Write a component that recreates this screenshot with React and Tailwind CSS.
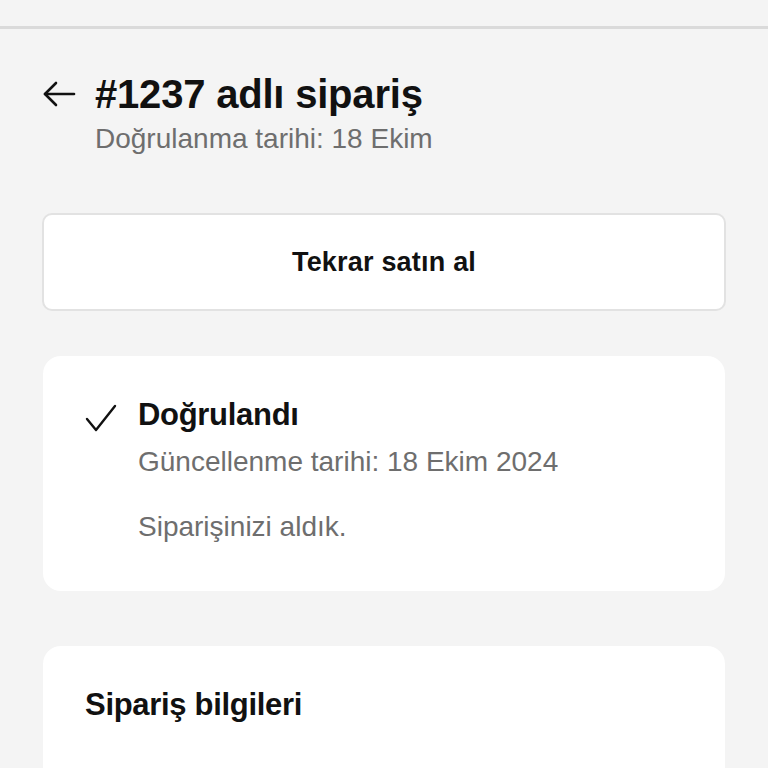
import React from "react";

export default function App() {
  return (
    <div className="w-[768px] h-[768px] overflow-hidden bg-[#f4f4f4] text-black" style={{ fontFamily: '"Liberation Sans", Arial, sans-serif' }}>
      <div className="h-[26px]" />
      <div className="h-[3px] bg-[#dadada]" />
      <div className="px-[42px]">
        <div className="mt-[41px] flex items-center h-[48px]">
          <svg width="34" height="30" viewBox="0 0 34 30" fill="none" stroke="#111" strokeWidth="2.6" strokeLinecap="round" strokeLinejoin="round" className="shrink-0">
            <path d="M32 15H3" />
            <path d="M14 4L3 15l11 11" />
          </svg>
          <h1 className="ml-[19px] text-[40px] font-bold leading-[48px] tracking-[-0.2px] text-[#111]">#1237 adlı sipariş</h1>
        </div>
        <div className="ml-[53px] mt-[4px] text-[28px] leading-[34px] text-[#6e6e6e]">Doğrulanma tarihi: 18 Ekim</div>

        <div className="mt-[57px] h-[98px] rounded-[10px] border-2 border-[#e2e2e2] bg-white flex items-center justify-center">
          <span className="text-[27px] font-bold text-[#111] tracking-[0.2px]">Tekrar satın al</span>
        </div>

        <div className="mt-[45px] mx-[1px] h-[235px] rounded-[18px] bg-white pl-[42px] pt-[39px]">
          <div className="flex items-center h-[40px]">
            <svg width="32" height="30" viewBox="0 0 32 30" fill="none" stroke="#111" strokeWidth="2.4" strokeLinecap="round" strokeLinejoin="round" className="shrink-0 mt-[6px]">
              <path d="M2 16l9 11L30 3" />
            </svg>
            <div className="ml-[21px] text-[31px] font-bold leading-[40px] text-[#111] tracking-[-0.3px]">Doğrulandı</div>
          </div>
          <div className="ml-[53px] mt-[10px] text-[28px] leading-[34px] text-[#6e6e6e]">Güncellenme tarihi: 18 Ekim 2024</div>
          <div className="ml-[53px] mt-[31px] text-[28px] leading-[34px] text-[#6e6e6e]">Siparişinizi aldık.</div>
        </div>

        <div className="mt-[55px] mx-[1px] h-[200px] rounded-[18px] bg-white pl-[42px] pt-[39px]">
          <div className="text-[31px] font-bold leading-[40px] text-[#111] tracking-[-0.3px]">Sipariş bilgileri</div>
        </div>
      </div>
    </div>
  );
}
